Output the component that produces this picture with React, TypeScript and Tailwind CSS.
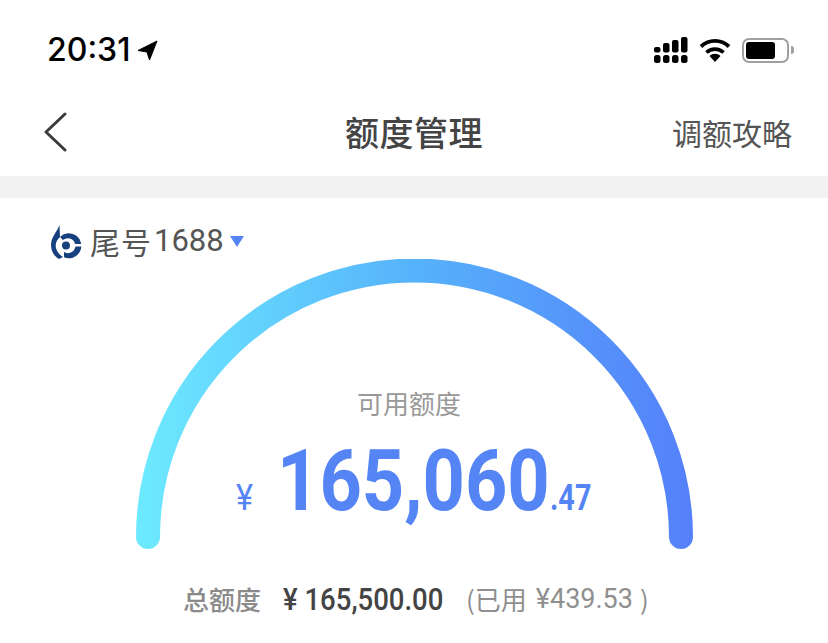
const CJK = "font-['Noto_Sans_CJK_SC','Noto_Sans',sans-serif]";
const NUM = "font-['Roboto',sans-serif]";

function StatusBar() {
  return (
    <div className="h-[88px] flex items-start justify-between pt-[32px] pl-[47px] pr-[34px]">
      <div className="flex items-center gap-[7px]">
        <span className="font-['Inter',sans-serif] font-medium text-[32px] leading-[36px] text-black">20:31</span>
        <svg width="21" height="21" viewBox="0 0 21 21" className="mt-[1px]">
          <path d="M1 10.5 L20 1 L12.5 20 L10 12 Z" fill="#000" stroke="#000" strokeWidth="1" strokeLinejoin="round" />
        </svg>
      </div>
      <div className="flex items-center mt-[5px]">
        <svg width="34" height="26" viewBox="0 0 34 26">
          <rect x="0" y="10" width="6.5" height="5.5" rx="2" fill="#000" />
          <rect x="9" y="6" width="6.5" height="9.5" rx="2" fill="#000" />
          <rect x="18" y="3" width="6.5" height="12.5" rx="2" fill="#000" />
          <rect x="27" y="0" width="6.5" height="15.5" rx="2" fill="#000" />
          <rect x="0" y="18" width="6.5" height="8" rx="2.5" fill="#000" />
          <rect x="9" y="18" width="6.5" height="8" rx="2.5" fill="#000" />
          <rect x="18" y="18" width="6.5" height="8" rx="2.5" fill="#000" />
          <rect x="27" y="18" width="6.5" height="8" rx="2.5" fill="#000" />
        </svg>
        <svg width="32" height="24" viewBox="0 0 32 24" className="ml-[11px]">
          <path d="M16 24 L10.5 18 C13.5 15 18.5 15 21.5 18 Z" fill="#000" />
          <path d="M7.5 14.5 C12 10 20 10 24.5 14.5" fill="none" stroke="#000" strokeWidth="3.6" />
          <path d="M2 8.5 C10 1 22 1 30 8.5" fill="none" stroke="#000" strokeWidth="3.8" />
        </svg>
        <div className="flex items-center gap-[2px] ml-[11px]">
          <div className="w-[47px] h-[25px] rounded-[7px] border-2 border-[#a0a0a0] p-[2px]">
            <div className="w-[29px] h-full rounded-[3px] bg-black" />
          </div>
          <div className="w-[3px] h-[8px] rounded-r-full bg-[#a0a0a0]" />
        </div>
      </div>
    </div>
  );
}

function NavBar() {
  return (
    <div className={`relative h-[88px] flex items-center justify-between pl-[44px] pr-[36px] ${CJK}`}>
      <svg width="24" height="40" viewBox="0 0 24 40">
        <path d="M21 2 L2 20 L21 38" fill="none" stroke="#3c3c3c" strokeWidth="3" strokeLinecap="round" strokeLinejoin="round" />
      </svg>
      <div className="absolute left-0 right-0 text-center text-[34px] leading-[44px] font-medium text-[#444] tracking-[0.5px]">额度管理</div>
      <div className="text-[30px] leading-[40px] text-[#555]">调额攻略</div>
    </div>
  );
}

function BankLogo() {
  return (
    <svg width="32" height="34" viewBox="0 0 32 34">
      <path d="M8.5 0 L9 12 C5.5 15 4 19 5 23 C6 27 9 30 12 32 L8 34 C3 31 0 26 0 20 C0 12 6 7 8.5 0 Z" fill="#17407f" />
      <path d="M9 12 A12.5 12.5 0 1 1 13 32.3 L13 27 A7.5 7.5 0 1 0 12 15 Z" fill="#17407f" />
      <rect x="22" y="19" width="10" height="2.5" fill="#fff" />
      <circle cx="15" cy="20.5" r="4" fill="#17407f" />
    </svg>
  );
}

function Gauge() {
  return (
    <div className="relative w-[828px] h-[302px] flex justify-center">
      <svg width="557" height="291" viewBox="0 0 557 291">
        <defs>
          <linearGradient id="arc" x1="0" y1="0" x2="1" y2="0">
            <stop offset="0" stopColor="#6ce8ff" />
            <stop offset="0.5" stopColor="#56b2fb" />
            <stop offset="1" stopColor="#5582fa" />
          </linearGradient>
        </defs>
        <path d="M12 278 A266.5 266.5 0 0 1 545 278" fill="none" stroke="url(#arc)" strokeWidth="24" strokeLinecap="round" />
      </svg>
      <div className="absolute left-0 right-0 top-[126px] flex flex-col items-center">
        <div className={`text-[26px] leading-[36px] text-[#999] -ml-[10px] ${CJK}`}>可用额度</div>
      </div>
      {/* amount sits inside the arc */}
      <div className={`absolute left-[236px] top-[178px] flex items-baseline text-[#5585f5] ${NUM}`}>
        <span className="text-[36px] leading-[88px] w-[41px] inline-block origin-left scale-x-[0.9]">¥</span>
        <span className="w-[273px] inline-block origin-left scale-x-[0.86] font-bold text-[86px] leading-[88px] whitespace-nowrap">165,060</span>
        <span className="inline-block origin-left scale-x-[0.8] font-bold text-[36px] leading-[88px]">.47</span>
      </div>
    </div>
  );
}

function Totals() {
  return (
    <div className={`flex items-center h-[40px] mt-[18px] pl-[183px] ${CJK}`}>
      <span className="w-[100px] text-[26px] leading-[36px] text-[#8a8a8a] font-medium">总额度</span>
      <span className={`w-[183px] inline-block origin-left scale-x-[0.86] ${NUM} font-medium text-[32px] leading-[36px] text-[#444] whitespace-nowrap`}>¥ 165,500.00</span>
      <span className="flex text-[26px] leading-[36px] text-[#8f8f8f] whitespace-nowrap">
        <span>(已用</span>
        <span className={`ml-[9px] ${NUM} text-[27px]`}>¥439.53</span>
        <span className="ml-[7px]">)</span>
      </span>
    </div>
  );
}

export default function App() {
  return (
    <div className="w-[828px] h-[643px] overflow-hidden bg-white">
      <StatusBar />
      <NavBar />
      <div className="h-[22px] bg-[#f2f2f2]" />
      <div className="flex items-center h-[61px] pl-[51px] pt-[26px]">
        <BankLogo />
        <span className={`ml-[7px] text-[30px] leading-[40px] text-[#555] tracking-[1px] -mt-[1px] ${CJK}`}>尾号</span>
        <span className={`ml-[2px] ${NUM} text-[31px] leading-[40px] text-[#555] -mt-[1px]`}>1688</span>
        <div className="ml-[6px] w-0 h-0 border-x-[7px] border-x-transparent border-t-[11px] border-t-[#5585f5]" />
      </div>
      <Gauge />
      <Totals />
    </div>
  );
}
